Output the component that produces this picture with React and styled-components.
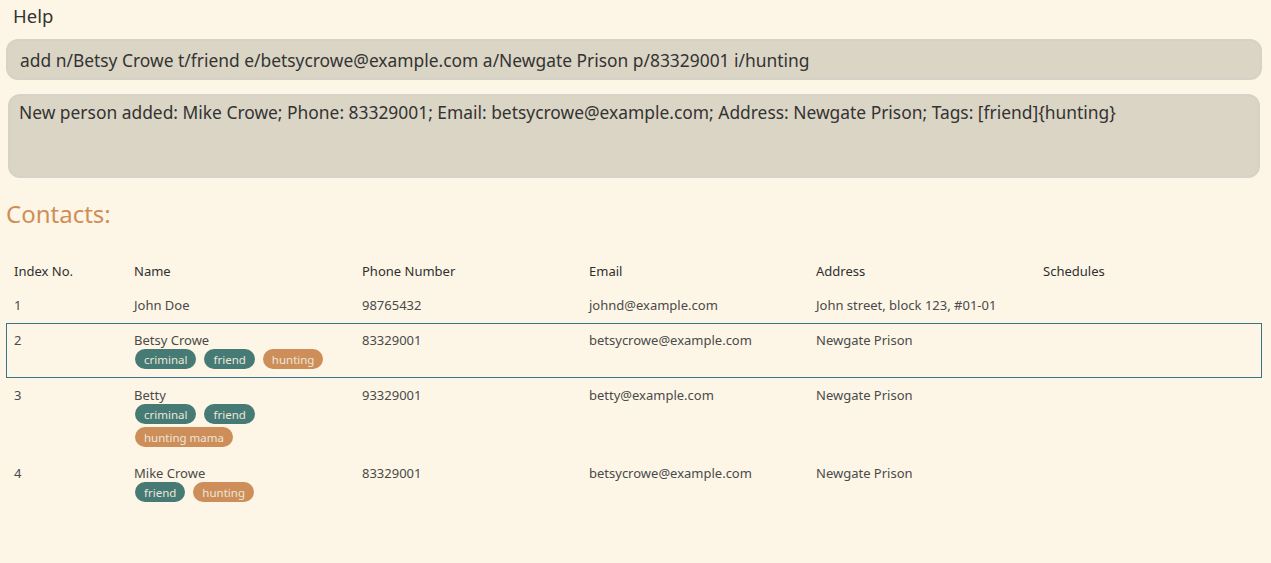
import styled, { createGlobalStyle } from "styled-components";

const GlobalStyle = createGlobalStyle`
  html, body {
    margin: 0;
    padding: 0;
    background: #fdf6e6;
  }
  body {
    font-family: "Noto Sans", "Open Sans", sans-serif;
    color: #3d3d3d;
  }
`;

const Page = styled.div`
  width: 1271px;
  min-height: 563px;
  background: #fdf6e6;
  padding: 0 9px 0 6px;
  box-sizing: border-box;
`;

const MenuBar = styled.div`
  height: 30px;
  display: flex;
  align-items: center;
  padding-left: 7px;
  font-size: 18.5px;
  color: #333;
`;

const CommandBox = styled.div`
  height: 41px;
  display: flex;
  align-items: center;
  padding: 0 12px;
  margin-top: 9px;
  background: #dbd5c5;
  border: 2px solid #d6d2c8;
  border-radius: 12px;
  box-sizing: border-box;
  font-size: 17.4px;
  color: #333;
`;

const ResultBox = styled.div`
  height: 84px;
  margin: 14px 2px 0;
  padding: 4px 9px;
  background: #dbd5c5;
  border: 2px solid #d6d2c8;
  border-radius: 12px;
  box-sizing: border-box;
  font-size: 17.4px;
  color: #333;
`;

const Title = styled.div`
  margin-top: 21px;
  font-size: 24px;
  line-height: 30px;
  color: #cf8e58;
`;

const Table = styled.div`
  margin-top: 25px;
  display: flex;
  flex-direction: column;
`;

const Row = styled.div`
  display: grid;
  grid-template-columns: 120px 228px 227px 227px 227px 1fr;
  padding: ${(p) => (p.$header ? "8px 7px 7px" : "8px 7px")};
  border: 1px solid ${(p) => (p.$selected ? "#3b7488" : "transparent")};
  font-size: 13px;
  line-height: 17px;
  color: ${(p) => (p.$header ? "#2f2f2f" : "#4a4a4a")};
`;

const Cell = styled.div`
  display: flex;
  flex-direction: column;
`;

const Tags = styled.div`
  display: flex;
  flex-wrap: wrap;
  gap: 3px 8px;
  margin-left: 1px;
  max-width: 200px;
`;

const Tag = styled.span`
  height: 20px;
  display: inline-flex;
  align-items: center;
  padding: 0 9px;
  border-radius: 10px;
  font-size: 11.5px;
  color: #ece6da;
  background: ${(p) => (p.$kind === "interest" ? "#cd8e59" : "#467a74")};
`;

const persons = [
  {
    name: "John Doe",
    phone: "98765432",
    email: "johnd@example.com",
    address: "John street, block 123, #01-01",
    tags: [],
  },
  {
    name: "Betsy Crowe",
    phone: "83329001",
    email: "betsycrowe@example.com",
    address: "Newgate Prison",
    tags: [["criminal"], ["friend"], ["hunting", "interest"]],
    selected: true,
  },
  {
    name: "Betty",
    phone: "93329001",
    email: "betty@example.com",
    address: "Newgate Prison",
    tags: [["criminal"], ["friend"], ["hunting mama", "interest"]],
  },
  {
    name: "Mike Crowe",
    phone: "83329001",
    email: "betsycrowe@example.com",
    address: "Newgate Prison",
    tags: [["friend"], ["hunting", "interest"]],
  },
];

const App = () => {
  return (
    <Page>
      <GlobalStyle />
      <MenuBar>Help</MenuBar>
      <CommandBox>
        add n/Betsy Crowe t/friend e/betsycrowe@example.com a/Newgate Prison p/83329001 i/hunting
      </CommandBox>
      <ResultBox>
        New person added: Mike Crowe; Phone: 83329001; Email: betsycrowe@example.com; Address: Newgate
        Prison; Tags: [friend]{"{hunting}"}
      </ResultBox>
      <Title>Contacts:</Title>
      <Table>
        <Row $header>
          <Cell>Index No.</Cell>
          <Cell>Name</Cell>
          <Cell>Phone Number</Cell>
          <Cell>Email</Cell>
          <Cell>Address</Cell>
          <Cell>Schedules</Cell>
        </Row>
        {persons.map((p, i) => (
          <Row key={i} $selected={p.selected}>
            <Cell>{i + 1}</Cell>
            <Cell>
              {p.name}
              {p.tags.length > 0 && (
                <Tags>
                  {p.tags.map(([label, kind]) => (
                    <Tag key={label} $kind={kind}>
                      {label}
                    </Tag>
                  ))}
                </Tags>
              )}
            </Cell>
            <Cell>{p.phone}</Cell>
            <Cell>{p.email}</Cell>
            <Cell>{p.address}</Cell>
            <Cell />
          </Row>
        ))}
      </Table>
    </Page>
  );
};

export default App;
